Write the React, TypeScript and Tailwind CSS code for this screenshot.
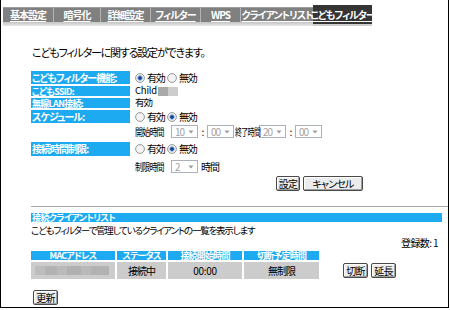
import React from "react";

const F = "[font-family:'Noto_Sans_CJK_JP',sans-serif] [font-feature-settings:'palt']";

function Radio({ checked }: { checked?: boolean }) {
  return (
    <svg width="10" height="10" viewBox="0 0 10 10" className="shrink-0">
      <circle cx="5" cy="5" r="4.4" fill="#f3f3f3" stroke="#8c8c8c" strokeWidth="0.9" />
      {checked && <circle cx="5" cy="5" r="2.3" fill="#1a3d8f" stroke="#7fb2ec" strokeWidth="0.9" />}
    </svg>
  );
}

function Radios({ first }: { first: boolean }) {
  return (
    <div className="flex items-center whitespace-nowrap text-[10px] leading-none tracking-[-1.2px] text-black">
      <div className="flex w-[32px] items-center">
        <Radio checked={first} />
        <span className="ml-[2px]">有効</span>
      </div>
      <div className="flex items-center">
        <Radio checked={!first} />
        <span className="ml-[2px]">無効</span>
      </div>
    </div>
  );
}

function Sel({ v }: { v: string }) {
  return (
    <div className="flex h-[13px] w-[27px] shrink-0 items-center justify-between border border-[#aab1ba] bg-white pl-[3px] pr-[3px] text-[10px] leading-none text-[#a3a3a3]">
      <span>{v}</span>
      <svg width="6" height="4" viewBox="0 0 6 4">
        <path d="M0.5 0.5 L5.5 0.5 L3 3.5 Z" fill="#9a9a9a" />
      </svg>
    </div>
  );
}

function Btn({ children, w }: { children: React.ReactNode; w: string }) {
  return (
    <div
      className={`flex h-[15px] items-center justify-center whitespace-nowrap rounded-[2px] border border-[#4a4a4a] bg-[#ececec] text-[10px] leading-none tracking-[-0.8px] text-black shadow-[inset_-1px_-1px_0_#a0a0a0,inset_1px_1px_0_#ffffff] ${w}`}
    >
      {children}
    </div>
  );
}

function Label({ children, h, small }: { children: React.ReactNode; h: string; small?: boolean }) {
  return (
    <div
      className={`flex w-[99px] shrink-0 items-center overflow-visible whitespace-nowrap bg-[#1eaaf0] pl-[1px] font-bold leading-none text-white ${small ? "text-[9px] tracking-[-0.7px]" : "text-[10px] tracking-[-1px]"} ${h}`}
    >
      {children}
    </div>
  );
}

const tabs: { t: string; w: string }[] = [
  { t: "基本設定", w: "w-[51px]" },
  { t: "暗号化", w: "w-[47px]" },
  { t: "詳細設定", w: "w-[50px]" },
  { t: "フィルター", w: "w-[50px]" },
  { t: "WPS", w: "w-[40px]" },
  { t: "クライアントリスト", w: "w-[72px]" },
];

export default function App() {
  return (
    <div className={`h-[310px] w-[450px] bg-white ${F}`}>
      <div className="flex h-[308px] w-[449px] flex-col border-b border-l border-r border-black">
        {/* Tab bar */}
        <div className="ml-[2px] mt-[5px] flex h-[21px] items-start">
          <div className="flex flex-col">
            <div className="mt-[2px] flex h-[15px] border-t border-[#9c9c9c] bg-[#808080]">
              {tabs.map((tb, i) => (
                <div
                  key={i}
                  className={`flex h-full items-center justify-center whitespace-nowrap text-[10px] font-bold leading-none tracking-[-1px] text-white underline underline-offset-[2px] ${tb.w} ${i < 5 ? "border-r border-[#b4b4b4]" : ""}`}
                >
                  {tb.t}
                </div>
              ))}
            </div>
            <div className="h-[4px] bg-gradient-to-b from-[#c4c4c4] to-[#e6e6e6]" />
          </div>
          <div className="flex flex-col">
            <div className="flex h-[19px] w-[59px] items-center justify-center whitespace-nowrap bg-[#353535] text-[10px] font-bold leading-none tracking-[-1px] text-white underline underline-offset-[2px]">
              こどもフィルター
            </div>
            <div className="h-[2px] bg-[#cfcfcf]" />
          </div>
        </div>

        {/* Settings */}
        <div className="flex flex-col pl-[30px]">
          <div className="mt-[18px] flex h-[16px] items-center whitespace-nowrap pl-[1px] text-[11px] leading-none tracking-[-1.2px] text-black">
            こどもフィルターに関する設定ができます。
          </div>

          <div className="mt-[11px] flex flex-col">
            <div className="flex items-center gap-[5px]">
              <Label h="h-[13px]">こどもフィルター機能:</Label>
              <Radios first={true} />
            </div>
            <div className="mt-[2px] flex items-center gap-[5px]">
              <Label h="h-[10px]" small>こどもSSID:</Label>
              <div className="flex h-[10px] items-center text-[9.5px] leading-none text-black">
                <span className="tracking-[-0.2px]">Child</span>
                <span className="ml-[1px] h-[9px] w-[10px] bg-[#a9a9a9]" />
                <span className="h-[9px] w-[10px] bg-[#cdcdcd]" />
              </div>
            </div>
            <div className="mt-[2px] flex items-center gap-[5px]">
              <Label h="h-[10px]" small>無線LAN接続:</Label>
              <div className="flex h-[10px] items-center text-[9.5px] leading-none tracking-[-1px] text-black">有効</div>
            </div>

            <div className="mt-[2px] flex items-center gap-[5px]">
              <Label h="h-[13px]">スケジュール:</Label>
              <Radios first={false} />
            </div>
            <div className="ml-[104px] mt-[2px] flex h-[13px] items-center whitespace-nowrap text-[10px] leading-none tracking-[-1px] text-black">
              <span className="w-[36px] shrink-0">
                <span className="inline-block origin-left scale-x-[0.8]">開始時間</span>
              </span>
              <Sel v="10" />
              <span className="w-[9px] shrink-0 text-center">:</span>
              <Sel v="00" />
              <span className="w-[25px] shrink-0 pl-[1px]">
                <span className="inline-block origin-left scale-x-[0.7]">終了時間</span>
              </span>
              <Sel v="20" />
              <span className="w-[9px] shrink-0 text-center">:</span>
              <Sel v="00" />
            </div>

            <div className="mt-[4px] flex items-center gap-[5px]">
              <Label h="h-[14px]">接続時間制限:</Label>
              <Radios first={false} />
            </div>
            <div className="ml-[104px] mt-[4px] flex h-[13px] items-center whitespace-nowrap text-[10px] leading-none tracking-[-1px] text-black">
              <span className="w-[36px] shrink-0">
                <span className="inline-block origin-left scale-x-[0.8]">制限時間</span>
              </span>
              <Sel v="2" />
              <span className="ml-[3px]">時間</span>
            </div>

            <div className="ml-[245px] mt-[3px] flex gap-[3px]">
              <Btn w="w-[24px]">設定</Btn>
              <Btn w="w-[60px]">キャンセル</Btn>
            </div>
          </div>
        </div>

        {/* Client list */}
        <div className="mt-[15px] flex flex-col pl-[30px]">
          <div className="h-px bg-[#a8a8a8]" />
          <div className="mr-[6px] mt-[6px] flex h-[9px] items-center whitespace-nowrap bg-[#1eaaf0] pl-[1px] text-[9px] font-bold leading-none tracking-[-0.6px] text-white">
            接続クライアントリスト
          </div>
          <div className="mt-[3px] flex h-[11px] items-center whitespace-nowrap text-[9.5px] leading-none tracking-[-1.2px] text-black">
            こどもフィルターで管理しているクライアントの一覧を表示します
          </div>
          <div className="mr-[10px] mt-[2px] flex h-[10px] items-center justify-end whitespace-nowrap text-[10px] leading-none tracking-[-0.6px] text-black">
            登録数: 1
          </div>
          <div className="mt-[3px] flex items-start">
            <div className="flex flex-col">
              <div className="flex h-[9px] gap-[2px] whitespace-nowrap text-[9px] font-bold leading-none tracking-[-0.8px] text-white">
                <div className="flex w-[84px] items-center justify-center bg-[#1eaaf0]">MACアドレス</div>
                <div className="flex w-[49px] items-center justify-center bg-[#1eaaf0]">ステータス</div>
                <div className="flex w-[74px] items-center justify-center bg-[#1eaaf0]">接続開始時間</div>
                <div className="flex w-[75px] items-center justify-center bg-[#1eaaf0]">切断予定時間</div>
              </div>
              <div className="mt-[2px] flex h-[17px] gap-[2px] whitespace-nowrap text-[10px] leading-none tracking-[-1px] text-black">
                <div className="flex w-[84px] items-center bg-[#cccccc] px-[4px]">
                  <div className="flex h-[9px] w-[74px]">
                    <div className="w-[10px] bg-[#bdbdbd]" />
                    <div className="w-[12px] bg-[#b3b3b3]" />
                    <div className="w-[10px] bg-[#bababa]" />
                    <div className="w-[14px] bg-[#b0b0b0]" />
                    <div className="w-[10px] bg-[#b9b9b9]" />
                    <div className="w-[18px] bg-[#b2b2b2]" />
                  </div>
                </div>
                <div className="flex w-[49px] items-center justify-center bg-[#cccccc]">接続中</div>
                <div className="flex w-[74px] items-center justify-center bg-[#cccccc] tracking-[-0.3px]">00:00</div>
                <div className="flex w-[75px] items-center justify-center bg-[#cccccc]">無制限</div>
              </div>
            </div>
            <div className="ml-[24px] mt-[12px] flex gap-[3px]">
              <Btn w="w-[25px]">切断</Btn>
              <Btn w="w-[25px]">延長</Btn>
            </div>
          </div>
          <div className="ml-[2px] mt-[11px] flex">
            <Btn w="w-[25px]">更新</Btn>
          </div>
        </div>
      </div>
    </div>
  );
}
